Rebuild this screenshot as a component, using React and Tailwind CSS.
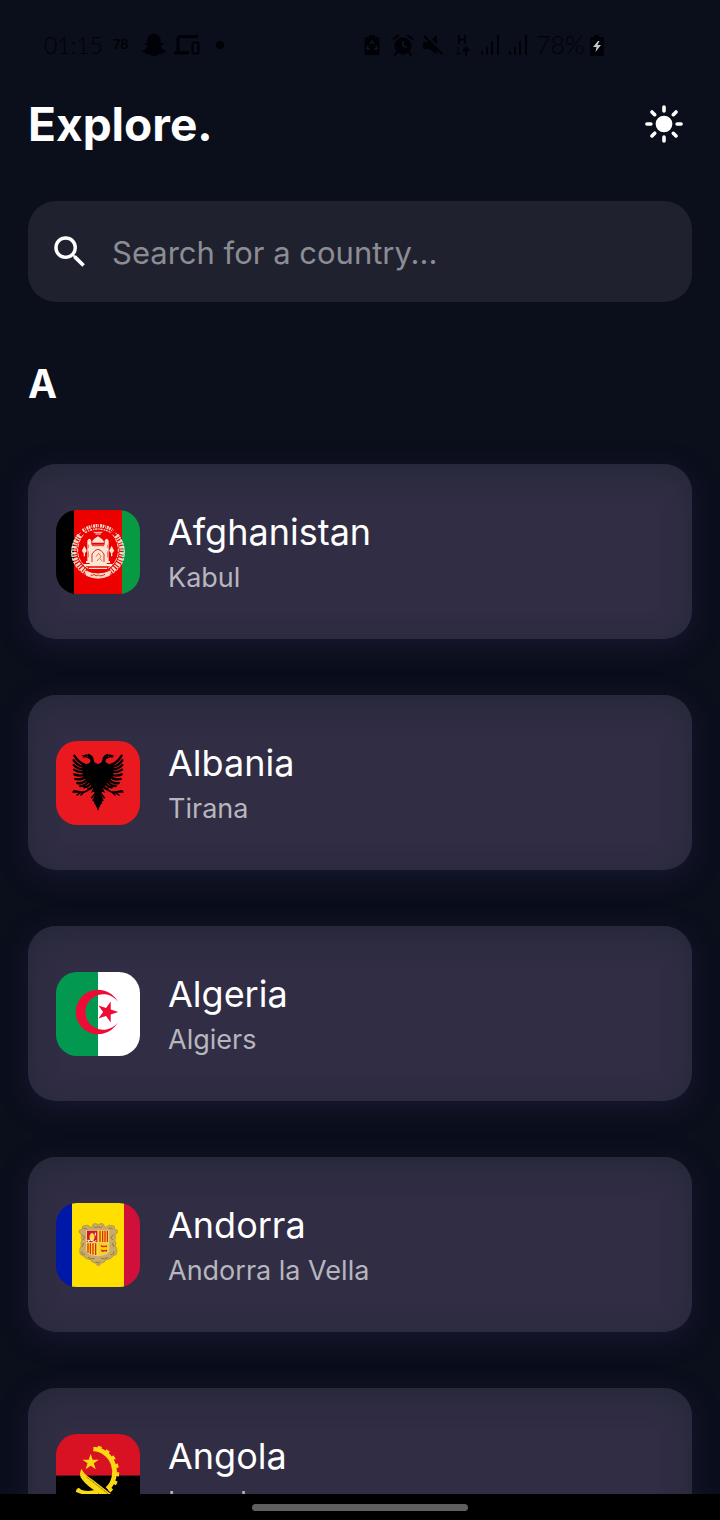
import { useState } from "react";
import { FaSnapchatGhost } from "react-icons/fa";
import { IoSunny } from "react-icons/io5";
import { MdSearch } from "react-icons/md";

function starPoints(cx, cy, r, startDeg) {
  return Array.from({ length: 10 }, (_, i) => {
    const radius = i % 2 ? r * 0.382 : r;
    const a = ((startDeg + i * 36) * Math.PI) / 180;
    return `${(cx + radius * Math.cos(a)).toFixed(1)},${(cy + radius * Math.sin(a)).toFixed(1)}`;
  }).join(" ");
}

function Afghanistan() {
  return (
    <svg viewBox="30 30 252 252" className="size-full" aria-hidden="true">
      <rect x="30" y="30" width="54" height="252" fill="#000" />
      <rect x="84" y="30" width="144" height="252" fill="#ed0000" />
      <rect x="228" y="30" width="54" height="252" fill="#089a42" />
      <g fill="none" stroke="#f6dcc8">
        <path d="M104 98C66 132 66 194 116 222M208 98C246 132 246 194 196 222" strokeWidth="3" strokeDasharray="9 3" />
        <path d="M101 106C74 140 78 188 120 216M211 106C238 140 234 188 192 216" strokeWidth="15" strokeDasharray="7 3 4 4" />
        <path d="M112 104C86 136 88 184 128 206M200 104C226 136 224 184 184 206" strokeWidth="3" strokeDasharray="12 3" />
        <path d="M110 92Q156 62 202 92" strokeWidth="10" strokeDasharray="5 3 2 3 6 2" />
        <path d="M117 98Q156 76 195 98" strokeWidth="4" strokeDasharray="7 3 4 2" />
        <path d="M143 97h26M148 102h17" strokeWidth="3" />
        <path d="M118 213Q156 231 194 213L191 226Q156 243 121 226Z" fill="#f6dcc8" strokeWidth="3" />
        <path d="M134 225q5 4 10-2q6 8 13 2q6 6 20-2" stroke="#d12d20" strokeWidth="3" />
      </g>
      <g fill="#fae6d2">
        <path d="M131 134h51v60h-51z" />
        <path d="M138 128q0-9 18-19q18 10 18 19z" />
        <path d="M124 122q6-12 12 0v64h-12zM176 122q6-12 12 0v64h-12z" />
        <path d="M120 183h72v6h-72zM114 192h84v7h-84zM129 203h54v4h-54z" />
        <path d="M115 137l8 17h-16zM197 137l8 17h-16zM113 155h4v14h-4zM195 155h4v14h-4z" />
        <circle cx="115" cy="153" r="6" />
        <circle cx="197" cy="153" r="6" />
      </g>
      <g fill="none" stroke="#e5281c" strokeWidth="3">
        <path d="M138 137h36M138 186v-24q18-28 36 0v24" />
        <path d="M150 170l8-10 7 9-4 7 8 7M153 183l6-7" strokeWidth="2" />
        <path d="M127 134v10m0 10v18M185 134v10m0 10v18" strokeWidth="2" />
      </g>
    </svg>
  );
}

function EagleHalf() {
  return (
    <g>
      <path d="M157 100l-10-5q-3-3-4-9q-1-11-10-15l-5-3-4 3q-7-1-11 2l-7 1 7 3-3 3 9-1 11 4q5 4 3 9-3 7-12 7l-10-4q-4 3-2 9l2 33 18 18 12 15q-2 9-7 15l10-3 4 7-7 18 7 14 9 18z" fill="#000" />
      <g fill="none" stroke="#000" strokeWidth="7" strokeLinecap="round">
        <path d="M120 104Q96 94 85 74" />
        <path d="M121 109Q96 107 83 88" />
        <path d="M122 116Q97 117 83 102" />
        <path d="M123 122Q99 127 84 116" />
        <path d="M124 129Q101 138 85 130" />
        <path d="M125 135Q105 149 88 144" />
        <path d="M128 141Q112 160 94 156" />
        <path d="M132 144Q121 166 103 165" />
        <path d="M138 149Q132 168 115 169" />
        <path d="M144 158Q137 173 127 174" />
      </g>
      <g fill="none" stroke="#000" strokeWidth="4.5" strokeLinecap="round">
        <path d="M136 172L116 183H81M105 183L84 179M105 184L93 192M114 183l-9 9" />
        <path d="M149 185l-12 15M150 192l-9 16M154 200l-7 17" />
      </g>
      <circle cx="125" cy="76" r="1.8" fill="#e9191f" />
    </g>
  );
}

function Albania() {
  return (
    <svg viewBox="30 30 252 252" className="size-full" aria-hidden="true">
      <rect x="30" y="30" width="252" height="252" fill="#e9191f" />
      <EagleHalf />
      <g transform="translate(312 0) scale(-1 1)">
        <EagleHalf />
      </g>
    </svg>
  );
}

function Algeria() {
  return (
    <svg viewBox="30 30 252 252" className="size-full" aria-hidden="true">
      <rect x="30" y="30" width="126" height="252" fill="#029850" />
      <rect x="156" y="30" width="126" height="252" fill="#fff" />
      <path d="M215.6 119.4A67 67 0 1 0 215.6 180.6A53.6 53.6 0 1 1 215.6 119.4Z" fill="#ee0c36" />
      <polygon points={starPoints(184, 150, 33, 0)} fill="#ee0c36" />
    </svg>
  );
}

function Andorra() {
  return (
    <svg viewBox="30 30 252 252" className="size-full" aria-hidden="true">
      <rect x="30" y="30" width="48" height="252" fill="#0018a8" />
      <rect x="78" y="30" width="156" height="252" fill="#fedf00" />
      <rect x="234" y="30" width="48" height="252" fill="#d00f3a" />
      <path
        d="M156 96q-4-6-10-4-8 0-6 8-6 6-10 0-4-6-14-2-10 0-7 9-4 4-9 4-3 10 7 15-4 8 1 15-6 8-2 18-6 7-5 16 0 12 10 13 8 12 23 12 4 10 14 10 4 8 9 8t9-8q10 0 14-10 15 0 23-12 10-1 10-13 1-9-5-16 4-10-2-18 5-7 1-15 10-5 7-15-5 0-9-4 3-9-7-9-10-4-14 2-4 6-10 0 2-8-6-8-6-2-12 4z"
        fill="#c8ab67"
        stroke="#a98a48"
        strokeWidth="2"
      />
      <path d="M112 107q8-5 11 3M188 108q6-7 12 0M109 125l7 8-5 8M202 125l-7 8 5 8M108 175q-2 10 9 10M203 175q2 10-9 10M126 193q10 8 20 3M186 193q-10 8-20 3M149 206q7 8 14 0M143 101q6 6 13 0 7 6 13 0M113 150l-5 12M199 150l5 12" fill="none" stroke="#94763d" strokeWidth="3" />
      <path d="M120 111h70v63q-3 13-35 16-32-3-35-16z" fill="#e9cf86" />
      <path d="M123 113h31v34h-31z" fill="#d5152b" />
      <path d="M158 113h29v34h-29z" fill="#fedf00" />
      <path d="M123 151h31v35q-28-3-31-14z" fill="#fedf00" />
      <path d="M158 151h29v21q-3 11-29 14z" fill="#fcd20a" />
      <path d="M162 113v34M170 113v34M177 113v34M184 113v34M126 151v28M133 151v32M141 151v34M149 151v35" stroke="#d5152b" strokeWidth="3.5" />
      <path d="M131 137q-2-14 7-18 10 4 7 18l-4 6h-6z" fill="#ffe23b" />
      <path d="M124 142h7M126 146l8-5 11 5 6-4M148 119v9" stroke="#fff" strokeWidth="3" fill="none" />
      <path d="M164 155l5 3h12l2-3v8l-4-1-10 1-4-2zM164 169l5 2h12l2-3v9l-6-2-8 2-3-3z" fill="#dc2520" />
    </svg>
  );
}

function Angola() {
  return (
    <svg viewBox="168 162 252 252" className="size-full" aria-hidden="true">
      <rect x="168" y="162" width="252" height="125" fill="#d81123" />
      <rect x="168" y="287" width="252" height="127" fill="#000" />
      <g fill="none" stroke="#fbd814">
        <path d="M280 207A66 69 0 0 1 322 327" strokeWidth="14" />
        <path d="M293 202A73 76 0 0 1 327 335" strokeWidth="9" strokeDasharray="12 14" />
      </g>
      <polygon points={starPoints(272, 247, 26, -90)} fill="#fbd814" />
      <path d="M245 266q-8 12-3 26 12 20 34 34l58 40 12-14-70-54q-28-19-31-32z" fill="#fbd814" />
      <path d="M260 291l70 55" stroke="#332b00" strokeWidth="2" strokeDasharray="4 2" />
      <path d="M236 323q-10 5-8 13l22 8q35 6 60-10l-11-9q-26 13-54 5z" fill="#fbd814" />
    </svg>
  );
}

const countries = [
  { name: "Afghanistan", capital: "Kabul", Flag: Afghanistan },
  { name: "Albania", capital: "Tirana", Flag: Albania },
  { name: "Algeria", capital: "Algiers", Flag: Algeria },
  { name: "Andorra", capital: "Andorra la Vella", Flag: Andorra },
  { name: "Angola", capital: "Luanda", Flag: Angola },
];

function SignalBars() {
  return (
    <svg viewBox="0 0 20 20" className="size-5" aria-hidden="true">
      <path d="M2 17v2M7 13v6M12 7v12M18 1v18" stroke="currentColor" strokeWidth="2" strokeLinecap="round" />
    </svg>
  );
}

function StatusBar() {
  return (
    <div className="flex h-[90px] shrink-0 items-center px-11 text-[#010207]">
      <span className="w-[69px] font-[Lato] text-[23px] font-light">01:15</span>
      <span className="w-[29px] font-[Inter] text-[13px] font-semibold">78</span>
      <FaSnapchatGhost className="mr-2 size-6" />
      <svg viewBox="0 0 26 20" className="mr-4 h-5 w-[26px]" aria-hidden="true">
        <path d="M4 17V4q0-2.500 2.500-2.500H24" fill="none" stroke="currentColor" strokeWidth="3" />
        <path d="M0 16h15v3.500H0z" fill="currentColor" />
        <rect x="18.500" y="7.500" width="6" height="11" rx="1" fill="none" stroke="currentColor" strokeWidth="2" />
      </svg>
      <span className="size-2 rounded-full bg-[#010207]" />
      <div className="ml-[140px] flex items-center">
        <svg viewBox="0 0 16 22" className="mr-3 h-[22px] w-4" aria-hidden="true">
          <path d="M5 1h6v2h2.500q2 0 2 2v14q0 2-2 2h-11q-2 0-2-2v-14q0-2 2-2h2.500z" fill="currentColor" />
          <path d="M6 10l2-3 2 3M12 12l1 3h-3M6 15h-3l1-3" fill="none" stroke="#131722" strokeWidth="1.300" />
        </svg>
        <svg viewBox="0 0 22 22" className="mr-2 size-[22px]" aria-hidden="true">
          <circle cx="11" cy="12" r="8.500" fill="currentColor" />
          <path d="M1.500 5L6 1.500M20.500 5L16 1.500M5 18l-2 3M17 18l2 3" stroke="currentColor" strokeWidth="2" strokeLinecap="round" />
          <path d="M11 7v5l4 1.500" fill="none" stroke="#131722" strokeWidth="1.500" />
        </svg>
        <svg viewBox="0 0 22 22" className="mr-2 size-[22px]" aria-hidden="true">
          <path d="M1 8h5L15 1v19l-8-5H1z" fill="currentColor" />
          <path d="M4 1l18 18" stroke="#0b0e1b" strokeWidth="2" />
          <path d="M2 2l18 18" stroke="currentColor" strokeWidth="2" />
        </svg>
        <svg viewBox="0 0 20 22" className="mr-2 h-[22px] w-5" aria-hidden="true">
          <path d="M7 1v9M13 1v9M7 5.500h6" stroke="currentColor" strokeWidth="2" />
          <path d="M6 13v8M3 18l3 3 3-3" fill="none" stroke="currentColor" strokeWidth="1" />
          <path d="M14 22v-8M11 17l3-3 3 3" fill="none" stroke="currentColor" strokeWidth="2" />
        </svg>
        <SignalBars />
        <span className="w-2" />
        <SignalBars />
        <span className="ml-2 font-[Lato] text-[25px] font-light">78%</span>
        <svg viewBox="0 0 16 24" className="ml-1 h-6 w-4" aria-hidden="true">
          <path d="M5 2h5v2h3q2 0 2 2v15q0 2-2 2h-10q-2 0-2-2v-15q0-2 2-2h2z" fill="currentColor" />
          <path d="M9 8l-5 6h3.500l-1 5 5.500-7h-3.500l2-4z" fill="#c4c5ca" />
        </svg>
      </div>
    </div>
  );
}

function CountryCard({ name, capital, Flag }) {
  return (
    <li className="flex h-[175px] items-center gap-7 rounded-[28px] bg-[#302d44] px-7 shadow-[0_7px_28px_rgba(48,45,90,0.36),inset_0_7px_28px_rgba(28,37,46,0.6)]">
      <div className="size-21 shrink-0 overflow-hidden rounded-[21px]">
        <Flag />
      </div>
      <div className="flex flex-col gap-[7px] pt-0.5">
        <h3 className="text-[36px] leading-[44px] text-white">{name}</h3>
        <p className="text-[27px] leading-[34px] text-[#b7b6be]">{capital}</p>
      </div>
    </li>
  );
}

export default function App() {
  const [query, setQuery] = useState("");
  const shown = countries.filter((c) => c.name.toLowerCase().includes(query.toLowerCase()));

  return (
    <div className="flex h-screen flex-col bg-[#0b0e1b] font-[Inter,sans-serif]">
      <StatusBar />
      <header className="flex h-[68px] shrink-0 items-center justify-between px-7">
        <h1 className="text-[46px] leading-[56px] font-bold text-white">Explore.</h1>
        <button type="button" aria-label="Switch theme" className="p-[7px] text-white">
          <IoSunny className="size-[42px]" />
        </button>
      </header>
      <div className="shrink-0 px-7 pt-[43px]">
        <label className="flex h-[101px] items-center gap-[21px] rounded-[28px] bg-[#1f212f] px-[21px]">
          <MdSearch className="size-[42px] shrink-0 text-white" />
          <input
            type="text"
            aria-label="Search for a country"
            placeholder="Search for a country..."
            value={query}
            onChange={(e) => setQuery(e.target.value)}
            className="min-w-0 flex-1 bg-transparent pt-1 text-[31px] text-white outline-none placeholder:text-[#8c8d94]"
          />
        </label>
      </div>
      <main className="min-h-0 flex-1 overflow-y-auto px-7 pt-[58px] [scrollbar-width:none]">
        <h2 className="text-[39px] leading-[48px] font-bold text-white">A</h2>
        <ul className="flex flex-col gap-14 pt-14 pb-14">
          {shown.map((c) => (
            <CountryCard key={c.name} {...c} />
          ))}
        </ul>
      </main>
      <div className="flex h-[26px] shrink-0 items-center justify-center bg-black">
        <span className="h-[7px] w-[216px] rounded-full bg-[#5f5f5f]" />
      </div>
    </div>
  );
}
